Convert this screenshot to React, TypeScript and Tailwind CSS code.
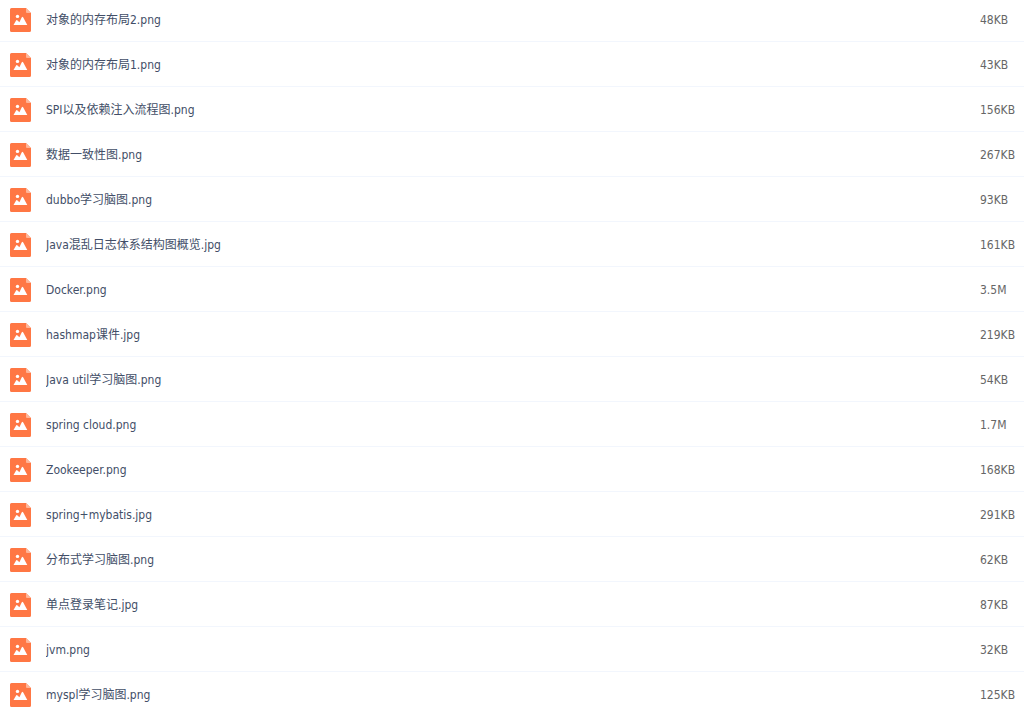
type FileItem = {
  name: string;
  size: string;
};

const FILES: FileItem[] = [
  { name: "对象的内存布局2.png", size: "48KB" },
  { name: "对象的内存布局1.png", size: "43KB" },
  { name: "SPI以及依赖注入流程图.png", size: "156KB" },
  { name: "数据一致性图.png", size: "267KB" },
  { name: "dubbo学习脑图.png", size: "93KB" },
  { name: "Java混乱日志体系结构图概览.jpg", size: "161KB" },
  { name: "Docker.png", size: "3.5M" },
  { name: "hashmap课件.jpg", size: "219KB" },
  { name: "Java util学习脑图.png", size: "54KB" },
  { name: "spring cloud.png", size: "1.7M" },
  { name: "Zookeeper.png", size: "168KB" },
  { name: "spring+mybatis.jpg", size: "291KB" },
  { name: "分布式学习脑图.png", size: "62KB" },
  { name: "单点登录笔记.jpg", size: "87KB" },
  { name: "jvm.png", size: "32KB" },
  { name: "myspl学习脑图.png", size: "125KB" },
];

function ImageFileIcon() {
  return (
    <svg className="h-6 w-[21px] shrink-0" viewBox="0 0 21 24" aria-hidden="true">
      <path d="M1.5 0H16l5 5v17.5a1.5 1.5 0 0 1-1.5 1.5h-18A1.5 1.5 0 0 1 0 22.5v-21A1.5 1.5 0 0 1 1.5 0Z" fill="#ff7744" />
      <path d="M16 0l5 5h-4a1 1 0 0 1-1-1V0Z" fill="#ffb598" />
      <circle cx="7.5" cy="8.4" r="1.7" fill="#fff" />
      <path d="M3.5 17l2.6-4.6q.5-.7 1.1-.1l2.2 2 2.4-5.1q.6-1 1.3 0L17.3 17H3.5Z" fill="#fff" />
    </svg>
  );
}

function FileRow({ name, size }: FileItem) {
  return (
    <li className="flex items-center border-b border-[#f2f6fd] pt-[11px] pb-[9px] pl-[10px] first:pt-2 last:border-b-0 last:pb-2">
      <ImageFileIcon />
      <span className="ml-[15px] min-w-0 flex-1 truncate text-[#424e67]">{name}</span>
      <span className="w-11 shrink-0 text-[#666666]">{size}</span>
    </li>
  );
}

export default function App() {
  return (
    <ul className="bg-white font-['DejaVu_Sans_Condensed','Noto_Sans_CJK_SC',sans-serif] text-xs">
      {FILES.map((file) => (
        <FileRow key={file.name} name={file.name} size={file.size} />
      ))}
    </ul>
  );
}
